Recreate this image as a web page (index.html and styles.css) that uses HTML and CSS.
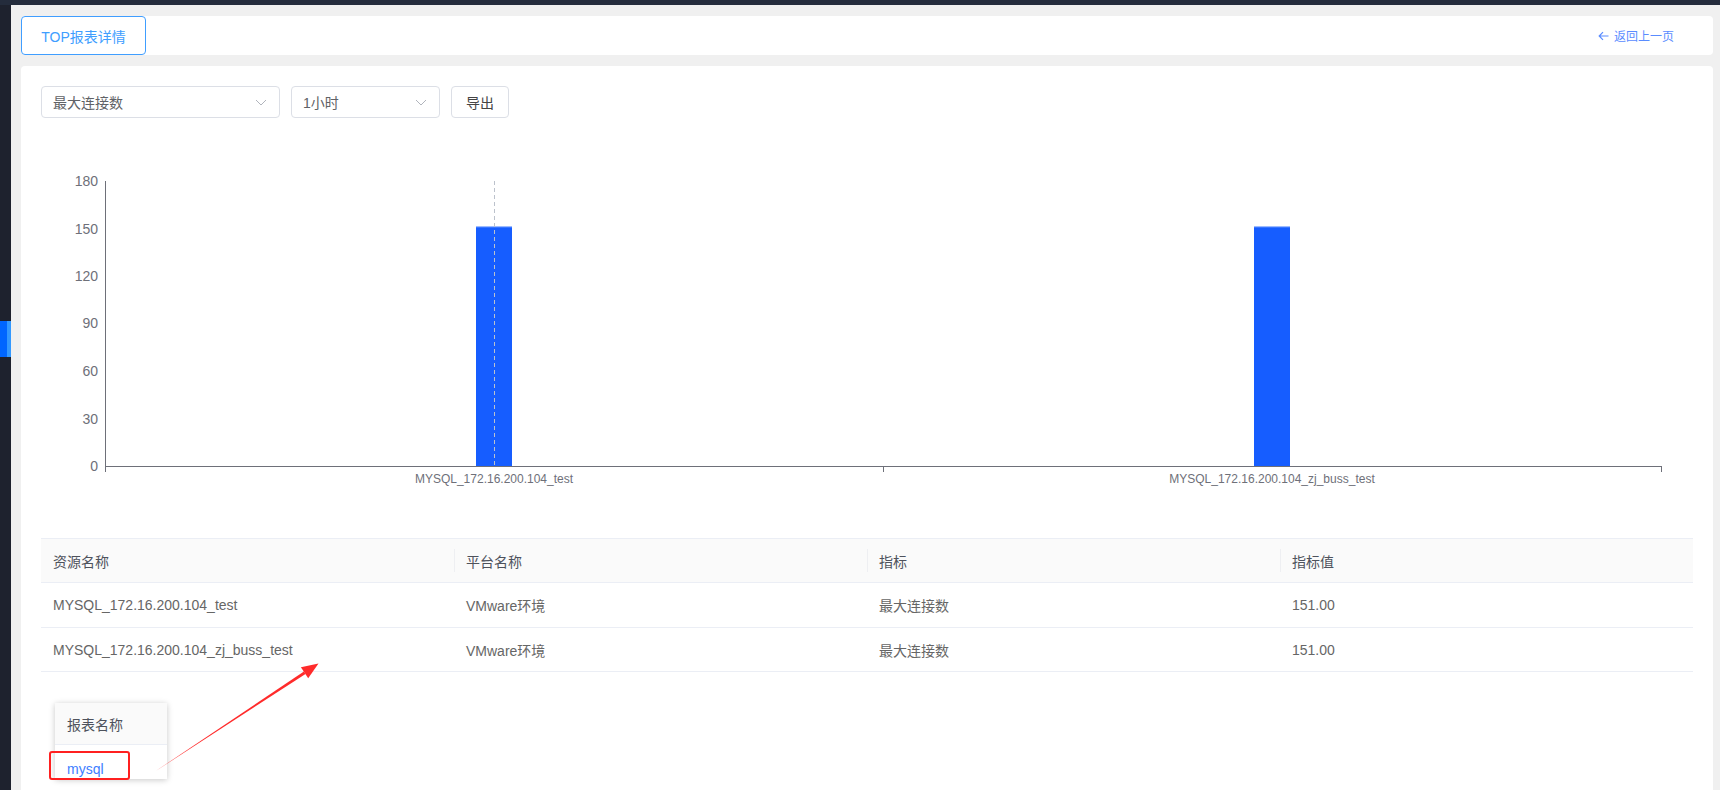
FILE: index.html
```html
<!DOCTYPE html>
<html lang="zh-CN">
<head>
<meta charset="utf-8">
<title>TOP报表详情</title>
<link rel="stylesheet" href="styles.css">
</head>
<body>
<div class="topbar"></div>
<div class="frame">
  <aside class="sidebar"><div class="side-accent"></div></aside>
  <main class="content">
    <header class="head-card">
      <div class="tab">TOP报表详情</div>
      <a class="back">
        <svg class="back-icon" width="11" height="10" viewBox="0 0 11 10"><path d="M5 1.2 L1.2 5 L5 8.8 M1.2 5 H10.5" fill="none" stroke="#5a8cff" stroke-width="1.2"/></svg>
        <span>返回上一页</span>
      </a>
    </header>
    <section class="main-card">
      <div class="toolbar">
        <div class="select select-wide"><span>最大连接数</span><svg class="chev" width="12" height="7" viewBox="0 0 12 7"><path d="M1 1 L6 6 L11 1" fill="none" stroke="#b0b4bc" stroke-width="1"/></svg></div>
        <div class="select select-narrow"><span>1小时</span><svg class="chev" width="12" height="7" viewBox="0 0 12 7"><path d="M1 1 L6 6 L11 1" fill="none" stroke="#b0b4bc" stroke-width="1"/></svg></div>
        <button class="btn">导出</button>
      </div>
      <svg class="chart" viewBox="0 0 1652 400" width="1652" height="400">
        <g class="ylabels" font-size="14" fill="#6e7079" text-anchor="end">
          <text x="57" y="48">180</text>
          <text x="57" y="95.5">150</text>
          <text x="57" y="143">120</text>
          <text x="57" y="190">90</text>
          <text x="57" y="238">60</text>
          <text x="57" y="285.5">30</text>
          <text x="57" y="333">0</text>
        </g>
        <line x1="64.5" y1="43" x2="64.5" y2="328" stroke="#6e7079"/>
        <rect x="435" y="88.9" width="36" height="239.1" fill="#165dff"/>
        <rect x="435" y="88.4" width="36" height="1" fill="#6d9bff"/>
        <rect x="1213" y="88.9" width="36" height="239.1" fill="#165dff"/>
        <rect x="1213" y="88.4" width="36" height="1" fill="#6d9bff"/>
        <line x1="453.5" y1="43" x2="453.5" y2="328" stroke="#bcc2cc" stroke-dasharray="4 3"/>
        <line x1="64" y1="328.5" x2="1621" y2="328.5" stroke="#6e7079"/>
        <line x1="64.5" y1="328" x2="64.5" y2="334" stroke="#6e7079"/>
        <line x1="842.5" y1="328" x2="842.5" y2="334" stroke="#6e7079"/>
        <line x1="1620.5" y1="328" x2="1620.5" y2="334" stroke="#6e7079"/>
        <g font-size="12" fill="#6e7079" text-anchor="middle">
          <text x="453" y="345">MYSQL_172.16.200.104_test</text>
          <text x="1231" y="345">MYSQL_172.16.200.104_zj_buss_test</text>
        </g>
      </svg>
      <table class="table">
        <thead>
          <tr><th>资源名称</th><th>平台名称</th><th>指标</th><th>指标值</th></tr>
        </thead>
        <tbody>
          <tr><td>MYSQL_172.16.200.104_test</td><td>VMware环境</td><td>最大连接数</td><td>151.00</td></tr>
          <tr><td>MYSQL_172.16.200.104_zj_buss_test</td><td>VMware环境</td><td>最大连接数</td><td>151.00</td></tr>
        </tbody>
      </table>
    </section>
  </main>
</div>
<div class="popover">
  <div class="pop-head">报表名称</div>
  <div class="pop-row">mysql</div>
</div>
<div class="mark-box"></div>
<svg class="mark-arrow" width="1720" height="790" viewBox="0 0 1720 790">
  <polygon points="155,771.5 303.9,671.6 305.5,674" fill="#ff2b2b"/>
  <polygon points="318.5,663.5 308.2,678.3 300.9,667.2" fill="#ff2b2b"/>
</svg>
</body>
</html>
```

FILE: styles.css
```css
* { box-sizing: border-box; }
html, body { margin: 0; padding: 0; }
body {
  width: 1720px;
  height: 790px;
  overflow: hidden;
  background: #f0f0f0;
  font-family: "Liberation Sans", "Noto Sans CJK SC", sans-serif;
  font-size: 14px;
  color: #606266;
  position: relative;
}
.topbar { height: 5px; background: #242c3c; }
.frame { display: flex; height: 785px; }
.sidebar {
  width: 11px;
  flex: none;
  background: #1e222e;
  padding-top: 316px;
}
.side-accent {
  height: 36px;
  background: #0066ff;
  border-right: 4px solid #3399ff;
}
.content {
  flex: 1;
  padding: 11px 7px 0 10px;
  display: flex;
  flex-direction: column;
  gap: 11px;
}
.head-card {
  height: 39px;
  background: #fff;
  border-radius: 4px;
  display: flex;
  align-items: center;
  justify-content: space-between;
}
.tab {
  width: 125px;
  height: 39px;
  border: 1px solid #409eff;
  border-radius: 4px;
  color: #409eff;
  font-size: 14px;
  display: flex;
  align-items: center;
  justify-content: center;
}
.back {
  display: flex;
  align-items: center;
  gap: 5px;
  margin-right: 39px;
  font-size: 12px;
  color: #5a8cff;
}
.main-card {
  flex: 1;
  background: #fff;
  border-radius: 4px 4px 0 0;
  padding: 20px 20px 0 20px;
}
.toolbar { display: flex; gap: 11px; height: 32px; }
.select {
  height: 32px;
  border: 1px solid #dcdfe6;
  border-radius: 4px;
  display: flex;
  align-items: center;
  justify-content: space-between;
  padding: 0 12px 0 11px;
  color: #606266;
}
.select-wide { width: 239px; }
.select-narrow { width: 149px; }
.btn {
  width: 58px;
  height: 32px;
  border: 1px solid #dcdfe6;
  border-radius: 4px;
  background: #fff;
  font-family: inherit;
  font-size: 14px;
  color: #444;
  padding: 0;
}
.chart { display: block; margin-top: 20px; font-family: "Liberation Sans", sans-serif; }
.table {
  width: 100%;
  border-collapse: collapse;
  table-layout: fixed;
}
.table th, .table td {
  text-align: left;
  padding: 0 12px;
  border-bottom: 1px solid #ebeef5;
  white-space: nowrap;
}
.table th {
  height: 44px;
  background: #fafafa;
  border-top: 1px solid #ebeef5;
  font-weight: 400;
  color: #4e525c;
  position: relative;
}
.table th + th::before {
  content: "";
  position: absolute;
  left: 0;
  top: 10px;
  bottom: 10px;
  width: 1px;
  background: #eeeff2;
}
.table td { height: 45px; color: #666; }
.table tbody tr:last-child td { height: 44px; }
.popover {
  position: absolute;
  left: 55px;
  top: 703px;
  width: 112px;
  height: 76px;
  background: #fff;
  box-shadow: 0 1px 6px rgba(0, 0, 0, 0.22);
}
.pop-head {
  height: 42px;
  padding-left: 12px;
  display: flex;
  align-items: center;
  background: #fafafa;
  border-bottom: 1px solid #ebeef5;
  color: #4e525c;
}
.pop-row {
  height: 34px;
  padding: 13px 0 0 12px;
  display: flex;
  align-items: center;
  color: #3d7eff;
}
.mark-box {
  position: absolute;
  left: 49px;
  top: 751px;
  width: 81px;
  height: 29px;
  border: 2px solid #ff2020;
  border-radius: 3px;
}
.mark-arrow { position: absolute; left: 0; top: 0; pointer-events: none; }
```
